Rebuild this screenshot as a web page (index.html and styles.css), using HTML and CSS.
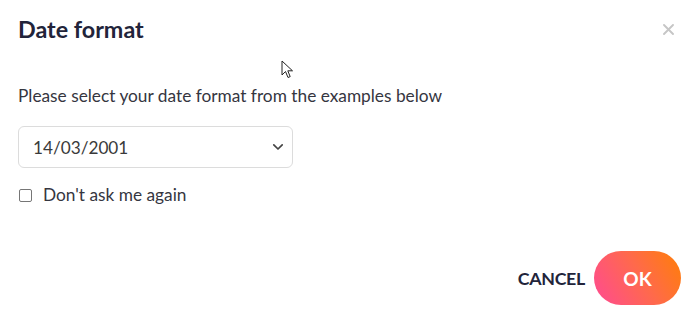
FILE: index.html
```html
<!DOCTYPE html>
<html lang="en">
<head>
<meta charset="utf-8">
<title>Date format</title>
<link rel="stylesheet" href="styles.css">
</head>
<body>
<div class="dialog">
  <div class="header">
    <h1 class="title">Date format</h1>
    <button class="close" aria-label="Close"><svg width="11" height="11" viewBox="0 0 11 11"><path d="M1 1 L10 10 M10 1 L1 10" stroke="#c6c6c6" stroke-width="1.9" stroke-linecap="round"/></svg></button>
  </div>
  <div class="content">
    <p class="lead">Please select your date format from the examples below</p>
    <div class="select">
      <span class="select-value">14/03/2001</span>
      <svg class="chevron" width="12" height="8" viewBox="0 0 12 8"><path d="M1.8 1.8 L6 6 L10.2 1.8" fill="none" stroke="#444" stroke-width="1.7" stroke-linecap="round" stroke-linejoin="round"/></svg>
    </div>
    <label class="check">
      <span class="box"></span>
      <span class="check-label">Don't ask me again</span>
    </label>
  </div>
  <div class="footer">
    <button class="btn-cancel">CANCEL</button>
    <button class="btn-ok">OK</button>
  </div>
  <svg class="cursor" width="14" height="20" viewBox="0 0 14 20"><path d="M1 1 L1 15 L4.5 11.5 L7 17.5 L9.2 16.6 L6.8 10.8 L11.5 10.8 Z" fill="#fff" stroke="#222" stroke-width="1" stroke-linejoin="round"/></svg>
</div>
</body>
</html>
```
FILE: styles.css
```css
* { box-sizing: border-box; }
html, body { margin: 0; padding: 0; background: #fff; }
body { font-family: Lato, "Noto Sans", sans-serif; color: #2a2b3a; }
.dialog {
  position: relative;
  width: 691px;
  height: 317px;
  padding: 14px 10px 12px 18px;
  display: flex;
  flex-direction: column;
}
.header {
  display: flex;
  align-items: center;
  justify-content: space-between;
  height: 30px;
}
.title {
  margin: 0;
  font-size: 23.3px;
  font-weight: 700;
  color: #22243a;
  line-height: 30px;
}
.close {
  border: 0;
  background: none;
  padding: 0;
  width: 11px;
  height: 11px;
  margin-right: 7px;
  display: flex;
  cursor: pointer;
}
.content { display: flex; flex-direction: column; }
.lead {
  margin: 42px 0 0;
  font-size: 17.3px;
  line-height: 20px;
  color: #35363f;
}
.select {
  margin-top: 20px;
  width: 275px;
  height: 42px;
  border: 1px solid #dcdcdc;
  border-radius: 6px;
  display: flex;
  align-items: center;
  justify-content: space-between;
  padding: 0 8px 0 14px;
  font-size: 17.2px;
  color: #3a3a3a;
}
.check {
  margin-top: 17px;
  display: flex;
  align-items: center;
  gap: 11px;
  font-size: 17.3px;
  color: #35363f;
  line-height: 20px;
}
.box {
  width: 13px;
  height: 13px;
  border: 1px solid #767676;
  border-radius: 2px;
  margin-left: 1px;
  background: #fff;
}
.footer {
  margin-top: auto;
  display: flex;
  justify-content: flex-end;
  align-items: center;
  gap: 9px;
}
.btn-cancel {
  border: 0;
  background: none;
  font-family: Lato, sans-serif;
  font-weight: 700;
  font-size: 17.8px;
  color: #22243a;
  padding: 0;
  letter-spacing: -0.3px;
}
.btn-ok {
  border: 0;
  width: 87px;
  height: 54px;
  border-radius: 27px;
  background: linear-gradient(60deg, #ff4a93 0%, #ff6a4a 55%, #ff7f06 100%);
  color: #fff;
  font-family: Lato, sans-serif;
  font-weight: 700;
  font-size: 19px;
  padding: 0;
}
.cursor {
  position: absolute;
  left: 281px;
  top: 60px;
}
```
